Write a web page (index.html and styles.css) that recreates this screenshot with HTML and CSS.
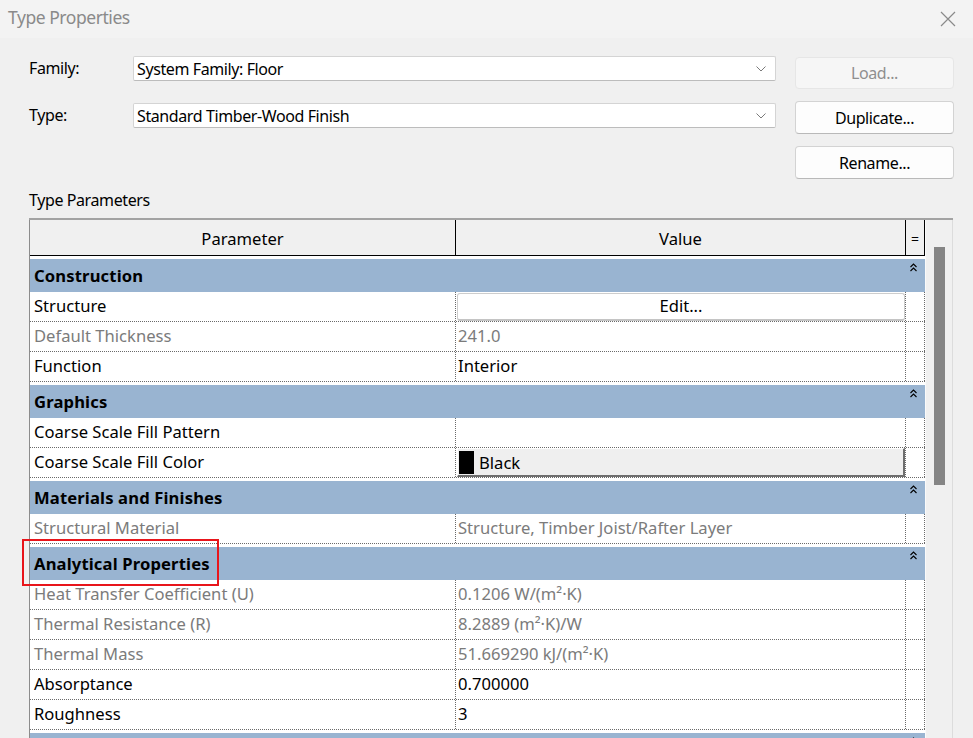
FILE: index.html
```html
<!DOCTYPE html>
<html>
<head>
<meta charset="utf-8">
<title>Type Properties</title>
<link rel="stylesheet" href="styles.css">
</head>
<body>
<div class="window">
  <div class="titlebar">
    <span class="title">Type Properties</span>
    <svg class="close" width="16" height="16" viewBox="0 0 16 16"><path d="M1 1 L15 15 M15 1 L1 15" stroke="#8a8a8a" stroke-width="1.2" fill="none"/></svg>
  </div>

  <div class="form">
    <div class="label l1">Family:</div>
    <div class="combo c1"><span>System Family: Floor</span><svg width="10" height="6" viewBox="0 0 10 6"><path d="M0.5 0.5 L5 5 L9.5 0.5" stroke="#7a7a7a" stroke-width="1" fill="none"/></svg></div>
    <div class="btn disabled b1">Load...</div>

    <div class="label l2">Type:</div>
    <div class="combo c2"><span>Standard Timber-Wood Finish</span><svg width="10" height="6" viewBox="0 0 10 6"><path d="M0.5 0.5 L5 5 L9.5 0.5" stroke="#7a7a7a" stroke-width="1" fill="none"/></svg></div>
    <div class="btn b2">Duplicate...</div>

    <div class="btn b3">Rename...</div>
  </div>

  <div class="section-label">Type Parameters</div>

  <div class="grid-wrap">
    <div class="table">
      <div class="thead">
        <div class="th">Parameter</div>
        <div class="th">Value</div>
        <div class="th eq">=</div>
      </div>

      <div class="group"><div class="gbar"><span>Construction</span><svg class="chev" width="7" height="9" viewBox="0 0 7 9"><path d="M0.5 4 L3.5 1 L6.5 4 M0.5 8 L3.5 5 L6.5 8" stroke="#000" stroke-width="1.1" fill="none"/></svg></div></div>
      <div class="row"><div class="c k">Structure</div><div class="c v"><div class="editbtn">Edit...</div></div><div class="c e"></div></div>
      <div class="row dim"><div class="c k">Default Thickness</div><div class="c v">241.0</div><div class="c e"></div></div>
      <div class="row"><div class="c k">Function</div><div class="c v">Interior</div><div class="c e"></div></div>

      <div class="group"><div class="gbar"><span>Graphics</span><svg class="chev" width="7" height="9" viewBox="0 0 7 9"><path d="M0.5 4 L3.5 1 L6.5 4 M0.5 8 L3.5 5 L6.5 8" stroke="#000" stroke-width="1.1" fill="none"/></svg></div></div>
      <div class="row"><div class="c k">Coarse Scale Fill Pattern</div><div class="c v"></div><div class="c e"></div></div>
      <div class="row"><div class="c k">Coarse Scale Fill Color</div><div class="c v"><div class="colorbtn"><span class="swatch"></span>Black</div></div><div class="c e"></div></div>

      <div class="group"><div class="gbar"><span>Materials and Finishes</span><svg class="chev" width="7" height="9" viewBox="0 0 7 9"><path d="M0.5 4 L3.5 1 L6.5 4 M0.5 8 L3.5 5 L6.5 8" stroke="#000" stroke-width="1.1" fill="none"/></svg></div></div>
      <div class="row dim"><div class="c k">Structural Material</div><div class="c v">Structure, Timber Joist/Rafter Layer</div><div class="c e"></div></div>

      <div class="group"><div class="gbar"><span>Analytical Properties</span><svg class="chev" width="7" height="9" viewBox="0 0 7 9"><path d="M0.5 4 L3.5 1 L6.5 4 M0.5 8 L3.5 5 L6.5 8" stroke="#000" stroke-width="1.1" fill="none"/></svg></div></div>
      <div class="row dim"><div class="c k">Heat Transfer Coefficient (U)</div><div class="c v">0.1206 W/(m²·K)</div><div class="c e"></div></div>
      <div class="row dim"><div class="c k">Thermal Resistance (R)</div><div class="c v">8.2889 (m²·K)/W</div><div class="c e"></div></div>
      <div class="row dim"><div class="c k">Thermal Mass</div><div class="c v">51.669290 kJ/(m²·K)</div><div class="c e"></div></div>
      <div class="row"><div class="c k">Absorptance</div><div class="c v">0.700000</div><div class="c e"></div></div>
      <div class="row"><div class="c k">Roughness</div><div class="c v">3</div><div class="c e"></div></div>

      <div class="group"><div class="gbar"><svg class="chev" width="7" height="9" viewBox="0 0 7 9"><path d="M0.5 4 L3.5 1 L6.5 4 M0.5 8 L3.5 5 L6.5 8" stroke="#000" stroke-width="1.1" fill="none"/></svg></div></div>
    </div>
    <div class="scrollbar"><div class="thumb"></div></div>
  </div>

  <div class="highlight"></div>
</div>
</body>
</html>
```

FILE: styles.css
```css
* { box-sizing: border-box; }

html, body {
  margin: 0;
  padding: 0;
  width: 973px;
  height: 738px;
  overflow: hidden;
  background: #f0f0f0;
  font-family: "Noto Sans", "Open Sans", sans-serif;
  color: #000;
}

.window {
  position: relative;
  width: 973px;
  height: 738px;
  overflow: hidden;
}

.titlebar {
  height: 38px;
  background: #f3f3f3;
  display: flex;
  align-items: center;
  justify-content: space-between;
  padding: 0 17px 4px 8px;
}

.title {
  font-size: 17.5px;
  color: #8a8a8a;
  letter-spacing: -0.45px;
}

.close { display: block; margin-top: 3px; }

.form {
  display: grid;
  grid-template-columns: 104px 643px 178px;
  grid-template-rows: 45px 45px 33px;
  margin: 18px 0 0 29px;
  font-size: 16px;
  letter-spacing: -0.4px;
}

.label {
  height: 25px;
  line-height: 25px;
  color: #000;
}
.l2 { margin-top: 2px; }

.combo {
  height: 25px;
  background: #fff;
  border: 1px solid #d4d4d4;
  border-bottom-color: #bcbcbc;
  border-radius: 2px;
  display: flex;
  align-items: center;
  justify-content: space-between;
  padding: 0 9px 0 3px;
}
.combo svg { display: block; }
.c2 { margin-top: 2px; }

.btn {
  height: 33px;
  margin-left: 19px;
  background: #fdfdfd;
  border: 1px solid #d3d3d3;
  border-bottom-color: #b9b9b9;
  border-radius: 4px;
  display: flex;
  align-items: center;
  justify-content: center;
}
.btn.disabled {
  height: 32px;
  margin-top: 1px;
  background: #f6f6f6;
  border-color: #e6e6e6;
  color: #8f8f8f;
}
.b3 { grid-column: 3; }

.section-label {
  margin: 11px 0 0 29px;
  height: 20px;
  line-height: 20px;
  font-size: 16px;
  letter-spacing: -0.4px;
}

.grid-wrap {
  display: flex;
  margin: 8px 0 0 29px;
  width: 924px;
  border-top: 2px solid #a3a3a3;
}

.table {
  width: 896px;
  background: #fff;
  border-left: 1px solid #8c8c8c;
  font-size: 16.6px;
}

.thead {
  display: grid;
  grid-template-columns: 426px 450px 19px;
  height: 36px;
  background: #f0f0f0;
  border-bottom: 1px solid #000;
}
.th {
  display: flex;
  align-items: center;
  justify-content: center;
  border-right: 1px solid #000;
  padding-top: 2px;
}
.th.eq { font-size: 14px; }

.group {
  padding-top: 3px;
  height: 36px;
}
.gbar {
  position: relative;
  height: 33px;
  background: #99b4d1;
  display: flex;
  align-items: center;
  padding: 0 0 1px 4px;
  font-weight: bold;
  letter-spacing: 0.15px;
}
.chev {
  position: absolute;
  right: 8px;
  top: 4px;
}

.row {
  display: grid;
  grid-template-columns: 426px 450px 19px;
  height: 30px;
  border-bottom: 1px dotted #6a6a6a;
}
.c {
  display: flex;
  align-items: center;
  padding: 0 0 2px 4px;
  border-right: 1px dotted #6a6a6a;
  white-space: nowrap;
}
.c.v { padding-left: 2px; }
.row .c.v:has(.editbtn), .row .c.v:has(.colorbtn) { padding: 0; align-items: stretch; }
.row.dim .c { color: #7b7b7b; }

.editbtn {
  flex: 1;
  margin: 1px 0 0 1px;
  background: #fff;
  border: 1px solid #cdcdcd;
  border-bottom: 2px solid #c4c4c4;
  border-radius: 3px;
  display: flex;
  align-items: center;
  justify-content: center;
  padding-bottom: 2px;
}

.colorbtn {
  flex: 1;
  margin: 0 0 0 1px;
  background: #efefef;
  border-top: 1px solid #fff;
  border-left: 1px solid #fff;
  border-right: 2px solid #6e6e6e;
  border-bottom: 2px solid #6e6e6e;
  display: flex;
  align-items: center;
  padding-left: 1px;
}
.swatch {
  width: 15px;
  height: 23px;
  background: #000;
  margin-right: 5px;
}

.scrollbar {
  width: 28px;
  background: #f0f0f0;
  border-left: 1px solid #fafafa;
  border-right: 1px solid #dcdcdc;
  height: 520px;
}
.thumb {
  width: 11px;
  height: 238px;
  margin: 27px 0 0 8px;
  background: #858585;
}

.highlight {
  position: absolute;
  left: 22px;
  top: 539px;
  width: 197px;
  height: 47px;
  border: 2px solid #e8151b;
}
```
